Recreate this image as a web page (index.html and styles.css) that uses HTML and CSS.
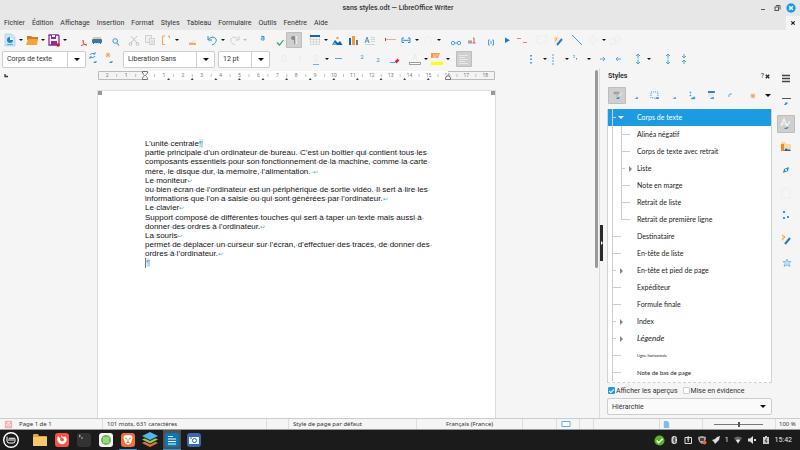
FILE: index.html
```html
<!DOCTYPE html>
<html lang="fr">
<head>
<meta charset="utf-8">
<title>sans styles.odt — LibreOffice Writer</title>
<link rel="stylesheet" href="styles.css">
</head>
<body>
<header class="titlebar">
  <h1>sans styles.odt — LibreOffice Writer</h1>
  <div class="window-buttons">
    <button aria-label="Réduire"><svg viewBox="0 0 10 10"><path d="M3 6.500h4" stroke="#555"/></svg></button>
    <button aria-label="Restaurer"><svg viewBox="0 0 10 10" fill="none" stroke="#555"><rect x="3" y="4" width="3.500" height="3.500"/><path d="M4 2.500h4v4"/></svg></button>
    <button aria-label="Fermer"><svg viewBox="0 0 10 10"><circle cx="5" cy="5" r="4.700" fill="#1b9be0"/><path d="M3.200 3.200l3.600 3.600M6.800 3.200L3.200 6.800" stroke="#fff" stroke-width="1.500"/></svg></button>
  </div>
</header>
<nav class="menubar">
  <button>Fichier</button><button>Édition</button><button>Affichage</button><button>Insertion</button><button>Format</button><button>Styles</button><button>Tableau</button><button>Formulaire</button><button>Outils</button><button>Fenêtre</button><button>Aide</button>
  <button class="close-doc" aria-label="Fermer le document"><svg viewBox="0 0 8 8"><path d="M2.300 2.300l3.400 3.400M5.700 2.300L2.300 5.700" stroke="#222" stroke-width="1.200"/></svg></button>
</nav>

<div class="toolbar standard">
  <div class="group">
    <button class="tool" aria-label="Nouveau"><svg viewBox="0 0 16 16"><path d="M3 2h7l3 3v9H3z" fill="#c9e5f8" stroke="#a5d3f2" stroke-width=".7"/><circle cx="8" cy="8" r="3" fill="#1d84cd"/><path d="M8 8V5a3 3 0 0 1 3 3z" fill="#fff"/><path d="M5 12.500h6" stroke="#5aa9de"/></svg></button><button class="arrow" aria-label="Plus"></button>
    <button class="tool" aria-label="Ouvrir"><svg viewBox="0 0 16 16"><path d="M3 4h4l1 1h6v3H3z" fill="#cd7c27"/><path d="M4 7h10l-1 6H2z" fill="#f8a23c"/></svg></button><button class="arrow" aria-label="Plus"></button>
    <button class="tool" aria-label="Enregistrer"><svg viewBox="0 0 16 16"><path d="M3 3h9l1 1v9H3z" fill="none" stroke="#8e299e" stroke-width="1.300"/><path d="M5 3h5v4H5zM5 9h6v4H5z" fill="#8e299e"/><path d="M6 3h3v2H6z" fill="#fff"/><circle cx="12" cy="13" r="1.800" fill="#e8101c"/></svg></button><button class="arrow" aria-label="Plus"></button>
  </div>
  <div class="group">
    <button class="tool" aria-label="Exporter PDF"><svg viewBox="0 0 16 16"><path d="M8 14c3-2 3-4 2-6-.5 3 1 5 4 5-3-1-5 0-6 1z" fill="none" stroke="#e04848" stroke-width=".8"/></svg></button>
    <button class="tool" aria-label="Imprimer"><svg viewBox="0 0 16 16"><path d="M4 5h8v2H4z" fill="#cacaca"/><rect x="3" y="7" width="10" height="4" rx="1" fill="#686b6d"/><path d="M4 9h8v3H4z" fill="#1d84cd"/><path d="M5 11h6v1H5z" fill="#d6ebfa"/></svg></button>
    <button class="tool" aria-label="Aperçu"><svg viewBox="0 0 16 16" fill="none" stroke="#3a98d8"><circle cx="10.200" cy="9" r="2.300"/><path d="M12 11l2 2.500" stroke-width="1.200"/></svg></button>
  </div>
  <div class="group">
    <button class="tool" aria-label="Couper"><svg viewBox="0 0 16 16" fill="none" stroke="#c4c4c4"><path d="M5 4l6 7M11 4l-6 7"/><circle cx="4.500" cy="12" r="1.400"/><circle cx="11.500" cy="12" r="1.400"/></svg></button>
    <button class="tool" aria-label="Copier"><svg viewBox="0 0 16 16" fill="#f0f0f0" stroke="#cfcfcf"><path d="M3.500 3.500h6v7h-6z"/><path d="M7.500 6.500h5v6h-5zM9 9h2.500M9 11h2.500"/></svg></button>
    <button class="tool" aria-label="Coller"><svg viewBox="0 0 16 16"><path d="M7 4H4.500v8.500H7M10 4h1.500v2" fill="none" stroke="#eda64b"/><path d="M7 6h5v6H7z" fill="#fafafa"/></svg></button><button class="arrow" aria-label="Plus"></button>
    <button class="tool clone" aria-label="Cloner"><svg viewBox="0 0 16 16"><path d="M7 8h4v2H7z" fill="#eee"/><path d="M4 11h7v2H4z" fill="#f4b14f"/><path d="M4 10h6v1H4z" fill="#e8dac4"/></svg></button>
  </div>
  <div class="group wide">
    <button class="tool" aria-label="Annuler"><svg viewBox="0 0 16 16" fill="none" stroke="#2b91d5"><path d="M4 4v4h4M4 8c2-3 6-4 8-1 1 2-1 5-4 6"/></svg></button><button class="arrow" aria-label="Plus"></button>
    <button class="tool" aria-label="Rétablir"><svg viewBox="0 0 16 16" fill="none" stroke="#cecece"><path d="M13 4v4H9M13 8C11 5 7 4 5 7c-1 2 1 5 4 6"/></svg></button><button class="arrow pale" aria-label="Plus"></button>
  </div>
  <div class="group medium">
    <button class="tool" aria-label="Rechercher"><svg viewBox="0 0 16 16"><path d="M7 4.500h3v3.500H8.300q-1.500-.2-1.300-1.300.2-1 3-.7" fill="none" stroke="#3c94cf"/><path d="M4 13l3-3" stroke="#eee"/></svg></button>
    <button class="tool" aria-label="Orthographe"><svg viewBox="0 0 16 16"><path d="M7 10.500l2.500 2.500L13.500 8" fill="none" stroke="#26ab61" stroke-width="1.200"/></svg></button>
    <button class="tool pressed" aria-label="Marques de formatage"><svg viewBox="0 0 16 16"><path d="M9 4H7a2 2 0 0 0 0 4h1v4h1z" fill="#8b8b8b"/><path d="M9 4h2v8h-1V5H9z" fill="#ededed"/></svg></button>
  </div>
  <div class="group medium">
    <button class="tool" aria-label="Tableau"><svg viewBox="0 0 16 16"><path d="M3 3h10v2H3z" fill="#1466a8"/><path d="M3.500 5v7.500h9V5M3 7.500h10M3 10h10M6.500 5v8M9.500 5v8" fill="none" stroke="#cfcfcf" stroke-width=".7"/></svg></button><button class="arrow" aria-label="Plus"></button>
    <button class="tool" aria-label="Image"><svg viewBox="0 0 16 16"><path d="M3 13l3-5 3 3 2-2 2.500 4z" fill="#0a63ac"/><path d="M3 13l3-3 2 3z" fill="#5ab1e9"/><circle cx="8.500" cy="6" r="1.300" fill="#f8a349"/></svg></button>
    <button class="tool" aria-label="Diagramme"><svg viewBox="0 0 16 16"><path d="M4 6h2v7H4z" fill="#1467ad"/><path d="M7 4h3v9H7z" fill="#ef9b38"/><path d="M11 8h2v5h-2z" fill="#777"/></svg></button>
    <button class="tool" aria-label="Zone de texte"><svg viewBox="0 0 16 16" fill="none"><path d="M4 11l2-6 2 6M5 9h2.500" stroke="#4799d2"/><path d="M9.500 5.500H14M9.500 7.500H14M9.500 9.500H14M4 12.500h10" stroke="#ccc" stroke-width=".8"/></svg></button>
  </div>
  <div class="group wide">
    <button class="tool" aria-label="Saut de page"><svg viewBox="0 0 16 16"><path d="M3 7.500h11" stroke="#e78888" stroke-dasharray="1.500 .6"/><path d="M3.500 6v3" stroke="#cd3737"/></svg></button>
    <button class="tool" aria-label="Champ"><svg viewBox="0 0 16 16" fill="none" stroke="#258ccc"><path d="M6 6H4v4.500h2M10 6h2v4.500h-2M5 8.300h6"/></svg></button><button class="arrow" aria-label="Plus"></button>
    <button class="tool" aria-label="Symbole"><svg viewBox="0 0 16 16"><path d="M5 12h2c-4-3-3-7 1-7s5 4 1 7h2" fill="none" stroke="#f0f0f0"/></svg></button><button class="arrow" aria-label="Plus"></button>
  </div>
  <div class="group">
    <button class="tool" aria-label="Lien"><svg viewBox="0 0 16 16" fill="none" stroke="#4aa3db"><circle cx="5" cy="11" r="1.700"/><circle cx="11" cy="11" r="1.700"/><path d="M6.500 11h3"/></svg></button>
    <button class="tool" aria-label="Note de bas de page"><svg viewBox="0 0 16 16"><path d="M4 8h4v4H4z" fill="#c6c6c6"/><path d="M9 6h1v5M8.500 11h3" fill="none" stroke="#d25559"/><path d="M4 10h4" stroke="#b46a6a"/></svg></button>
  </div>
  <div class="group">
    <button class="tool" aria-label="Repère de texte"><svg viewBox="0 0 16 16" fill="none" stroke="#4da4da"><path d="M7 8H5.500v5H7M9 8h1.500v5H9M8 9v3"/></svg></button>
    <button class="tool" aria-label="Renvoi"><svg viewBox="0 0 16 16"><path d="M6 5.500l5 2.700-5 2.700z" fill="#187dc8"/></svg></button>
    <button class="tool" aria-label="Suivi des modifications"><svg viewBox="0 0 16 16"><path d="M2 6.500h4M8 10.500h4" stroke="#ef7d7d"/></svg></button>
  </div>
  <div class="group">
    <button class="tool" aria-label="Commentaire"><svg viewBox="0 0 16 16"><path d="M3 4h10v7H7l-2 2v-2H3z" fill="none" stroke="#ededed"/></svg></button>
    <button class="tool" aria-label="Fonctions de dessin"><svg viewBox="0 0 16 16"><path d="M4 5l3-1 3 2-3 4-3 2z" fill="#fde2c3"/><path d="M5 6l2 1-2 2" stroke="#f1a455" fill="none"/><path d="M7 13l5-6" stroke="#217fc5" stroke-width="2"/></svg></button>
  </div>
  <div class="group">
    <button class="tool" aria-label="Ligne"><svg viewBox="0 0 16 16"><path d="M3 3l10 10" stroke="#3e9cd9"/></svg></button>
    <button class="tool" aria-label="Formes"><svg viewBox="0 0 16 16"><path d="M8 4l4 4-4 4-4-4z" fill="none" stroke="#ededed"/></svg></button><button class="arrow" aria-label="Plus"></button>
    <button class="tool" aria-label="Propriétés"><svg viewBox="0 0 16 16" fill="none" stroke="#ededed"><rect x="3" y="7" width="5" height="5"/><circle cx="10" cy="7" r="3"/></svg></button>
  </div>
</div>

<div class="toolbar formatting">
  <label class="combo style-combo"><select aria-label="Style de paragraphe"><option>Corps de texte</option></select></label>
  <button class="tool" aria-label="Actualiser le style"><svg viewBox="0 0 16 16" fill="none" stroke="#3899d5"><path d="M3 4a3 2 0 0 1 5-1M8 5a3 2 0 0 1-5 1M8 1v2H6M3 8V6h2" stroke-width=".9"/><path d="M6 12q1-2 4-2l-1 2z" fill="#3899d5" stroke="none"/></svg></button>
  <button class="tool" aria-label="Nouveau style"><svg viewBox="0 0 16 16"><path d="M3 2l4 4M7 2L3 6M5 1.500v5M2.500 4h5" stroke="#f3a25a" stroke-width=".9"/><path d="M6 12q1-2 4-2l-1 2z" fill="#3899d5"/></svg></button>
  <label class="combo font-combo"><select aria-label="Police"><option>Liberation Sans</option></select></label>
  <label class="combo size-combo"><select aria-label="Taille"><option>12 pt</option></select></label>
  <div class="group letters">
    <button class="tool ghost" aria-label="Gras">G</button>
    <button class="tool ghost" aria-label="Italique"><i>I</i></button>
    <button class="tool ghost" aria-label="Souligné"><span class="underlined">S</span></button><button class="arrow" aria-label="Plus"></button>
    <button class="tool ghost" aria-label="Barré"><svg viewBox="0 0 16 16"><path d="M5 7.500h7" stroke="#4ba4dd"/></svg></button>
  </div>
  <div class="group medium">
    <button class="tool script" aria-label="Exposant"><sup>2</sup></button>
    <button class="tool script" aria-label="Indice"><sub>2</sub></button>
    <button class="tool" aria-label="Effacer"><svg viewBox="0 0 16 16"><path d="M4 11.500h5" stroke="#51a9df"/><path d="M9.500 11.500l3-3" stroke="#d9263c" stroke-width="2.500"/></svg></button>
  </div>
  <div class="group medium">
    <button class="tool" aria-label="Couleur de police"><svg viewBox="0 0 16 16"><path d="M6 9l2-6 2 6M7 7h2" fill="none" stroke="#eaeaea"/><rect x="2.500" y="11.500" width="11" height="2" fill="#fff" stroke="#888" stroke-width=".8"/></svg></button><button class="arrow" aria-label="Plus"></button>
    <button class="tool" aria-label="Surlignage"><svg viewBox="0 0 16 16"><path d="M2 2h9l-2 5H2z" fill="#f49b48"/><path d="M4 4h3M4 6h2M9 3l-3 4" stroke="#fff1db" stroke-width=".7"/><path d="M2 11h12v3H2z" fill="#ff0"/></svg></button><button class="arrow" aria-label="Plus"></button>
  </div>
  <div class="group wide">
    <button class="tool pressed" aria-label="Aligner à gauche"><svg viewBox="0 0 16 16"><path d="M3 4.500h9M3 6.500h6M3 8.500h9M3 10.500h6M3 12.500h9" stroke="#eee" stroke-width=".8"/></svg></button>
    <button class="tool" aria-label="Centrer"></button><button class="tool" aria-label="Aligner à droite"></button><button class="tool" aria-label="Justifier"></button>
  </div>
  <div class="group">
    <button class="tool" aria-label="Puces"><svg viewBox="0 0 16 16"><path d="M5 4v9" stroke="#1982cb" stroke-width="1.500" stroke-dasharray="1.500 2"/></svg></button><button class="arrow" aria-label="Plus"></button>
    <button class="tool" aria-label="Numérotation"><svg viewBox="0 0 16 16"><path d="M5 3v11" stroke="#4da4dc" stroke-width="1" stroke-dasharray="2 1"/></svg></button><button class="arrow" aria-label="Plus"></button>
    <button class="tool" aria-label="Plan"><svg viewBox="0 0 16 16"><path d="M4 4v3M6.500 7v2" stroke="#2b8fd2" stroke-dasharray="1.500 .7"/></svg></button><button class="arrow" aria-label="Plus"></button>
  </div>
  <div class="group">
    <button class="tool" aria-label="Augmenter le retrait"><svg viewBox="0 0 16 16"><path d="M5 8h5M8 6l2 2-2 2" fill="none" stroke="#54a8dd"/></svg></button>
    <button class="tool" aria-label="Diminuer le retrait"><svg viewBox="0 0 16 16"><path d="M10 8H5M7 6L5 8l2 2" fill="none" stroke="#54a8dd"/></svg></button>
  </div>
  <div class="group spacing">
    <button class="tool" aria-label="Interligne"><svg viewBox="0 0 16 16"><path d="M8 3v10M6 5l2-2 2 2M6 11l2 2 2-2" fill="none" stroke="#4ba3dc"/><path d="M6 8h4" stroke="#f5f5f5"/></svg></button><button class="arrow" aria-label="Plus"></button>
  </div>
  <div class="group wide">
    <button class="tool" aria-label="Augmenter l’espacement"><svg viewBox="0 0 16 16"><path d="M8 3v10M6 5l2-2 2 2M6 11l2 2 2-2" fill="none" stroke="#4ba3dc"/><path d="M6 8h4" stroke="#f5f5f5"/></svg></button>
    <button class="tool" aria-label="Diminuer l’espacement"><svg viewBox="0 0 16 16"><path d="M8 3v4M6 5l2 2 2-2M8 13V9M6 11l2-2 2 2" fill="none" stroke="#4ba3dc"/></svg></button>
  </div>
</div>

<main class="workspace">
  <section class="editor">
    <svg class="ruler" id="ruler" viewBox="0 0 594 14" preserveAspectRatio="xMinYMin" aria-hidden="true"></svg>
    <div class="canvas">
      <article class="page" id="page">
        <p>L’unité centrale<b class="pilcrow">¶</b></p>
        <p>partie principale d’un ordinateur de bureau. C’est un boîtier qui contient tous les <br>composants essentiels pour son fonctionnement de la machine, comme la carte <br>mère, le disque dur, la mémoire, l’alimentation. <b class="ret">↩</b><br>Le moniteur<b class="ret">↩</b><br>ou bien écran de l’ordinateur est un périphérique de sortie vidéo. Il sert à lire les <br>informations que l’on a saisie ou qui sont générées par l’ordinateur.<b class="ret">↩</b><br>Le clavier<b class="ret">↩</b><br>Support composé de différentes touches qui sert à taper un texte mais aussi à <br>donner des ordres à l’ordinateur.<b class="ret">↩</b><br>La souris<b class="ret">↩</b><br>permet de déplacer un curseur sur l’écran, d’effectuer des tracés, de donner des <br>ordres à l’ordinateur.<b class="ret">↩</b></p>
        <p class="caret"><b class="pilcrow">¶</b></p>
      </article>
    </div>
  </section>
  <div class="scrollbar"><div class="thumb"></div></div>
  <div class="splitter"><button aria-label="Masquer le volet"></button></div>
  <aside class="deck">
    <header class="deck-title"><h2>Styles</h2><button>?</button><button aria-label="Fermer le volet"><svg viewBox="0 0 8 8"><path d="M2 2l4 4M6 2L2 6" stroke="#222" stroke-width="1.500"/></svg></button></header>
    <div class="style-kinds">
      <button class="kind pressed" aria-label="Paragraphe"><svg viewBox="0 0 18 17"><path d="M6 5h5v2H6zM9 5v6" stroke="#aaa" fill="#999" stroke-width=".8"/><path d="M8 12q1-2 4-2l-1 2z" fill="#2c8ed2"/><path d="M12 9l2-3" stroke="#eee"/></svg></button>
      <button class="kind" aria-label="Caractère"><svg viewBox="0 0 18 17"><path d="M8 12q1-2 3-2v2z" fill="#4ba2dc"/></svg></button>
      <button class="kind" aria-label="Cadre"><svg viewBox="0 0 18 17"><rect x="5" y="5" width="7" height="6" fill="none" stroke="#3e9ad8" stroke-dasharray="1 1"/><path d="M9 12q1-2 4-2v2z" fill="#3e9ad8"/></svg></button>
      <button class="kind" aria-label="Page"><svg viewBox="0 0 18 17"><path d="M8 12q1-2 3-2v2z" fill="#4ba2dc"/></svg></button>
      <button class="kind" aria-label="Liste"><svg viewBox="0 0 18 17"><path d="M6 5h1v1H6zM6 8h1v1H6zM7 12q1-2 4-2v2z" fill="#3e9ad8" stroke="#3e9ad8" stroke-width=".5"/></svg></button>
      <button class="kind" aria-label="Tableau"><svg viewBox="0 0 18 17"><path d="M6 4h7v2H6z" fill="#2a80c0"/><path d="M8 12q1-2 4-2v2z" fill="#3e9ad8"/><path d="M6 7h6M6 9h6" stroke="#ddd"/></svg></button>
      <button class="kind" aria-label="Mode remplir"><svg viewBox="0 0 18 17"><path d="M8 10V8q0-1 3-1" fill="none" stroke="#4ba2dc"/></svg></button>
      <button class="kind last" aria-label="Nouveau style"><svg viewBox="0 0 18 17"><path d="M7 7l4 4M11 7l-4 4M9 6.500v5M6.500 9h5" stroke="#f2a057"/></svg></button>
      <button class="arrow big" aria-label="Actions de style"></button>
    </div>
    <ul class="tree">
      <li class="selected open">Corps de texte</li>
      <li class="child">Alinéa négatif</li>
      <li class="child">Corps de texte avec retrait</li>
      <li class="child closed">Liste</li>
      <li class="child">Note en marge</li>
      <li class="child">Retrait de liste</li>
      <li class="child end">Retrait de première ligne</li>
      <li>Destinataire</li>
      <li>En-tête de liste</li>
      <li class="closed">En-tête et pied de page</li>
      <li>Expéditeur</li>
      <li>Formule finale</li>
      <li class="closed">Index</li>
      <li class="closed legend">Légende</li>
      <li class="tiny">Ligne horizontale</li>
      <li class="small">Note de bas de page</li>
    </ul>
    <div class="checks">
      <label><input type="checkbox" checked>Afficher les aperçus</label>
      <label><input type="checkbox">Mise en évidence</label>
    </div>
    <label class="combo filter-combo"><select aria-label="Filtre"><option>Hiérarchie</option></select></label>
  </aside>
  <nav class="tabs">
    <button aria-label="Paramètres"><svg viewBox="0 0 18 18"><path d="M5 6.500h8M5 9.500h8M5 12.500h8" stroke="#444" stroke-width="1.400"/></svg></button>
    <button aria-label="Propriétés"><svg viewBox="0 0 18 18"><path d="M5 6.500h9" stroke="#555"/><path d="M7 13l2-3 2 1-2 2z" fill="#2e90d3"/></svg></button>
    <button class="pressed" aria-label="Styles"><svg viewBox="0 0 18 18"><path d="M4 11l3-7 3 7M5 9h4M10 11l3-5" fill="none" stroke="#f5f5f5" stroke-width="1.200"/><path d="M7 14q1-2 5-2l-2 2z" fill="#2e90d3"/></svg></button>
    <button aria-label="Galerie"><svg viewBox="0 0 18 18"><path d="M4 4h4l1 2h5v7H4z" fill="#fbd6a6"/><path d="M4 6h3v7H4z" fill="#f08b28"/><path d="M7 13l2-3 2 2 1-1 2 2z" fill="#1466ad"/></svg></button>
    <button aria-label="Navigateur"><svg viewBox="0 0 18 18"><path d="M6 12l1-4 5-2-1 4z" fill="#288bd0"/><circle cx="9" cy="9" r="1" fill="#fff"/></svg></button>
    <button aria-label="Page"><svg viewBox="0 0 18 18"><path d="M5 4h5l3 3v7H5z" fill="none" stroke="#ededed"/></svg></button>
    <button aria-label="Inspecteur de styles"><svg viewBox="0 0 18 18"><path d="M6 4h2v2H6zM6 10h2v2H6zM10 9h2v2h-2z" fill="#3596d6"/></svg></button>
    <button aria-label="Suivi"><svg viewBox="0 0 18 18"><path d="M5 5l4 1-4 6z" fill="#fbd6a6"/><path d="M5 5l3 2-3 3" fill="none" stroke="#f2a057"/><path d="M8 14l5-6" stroke="#1d7cc4" stroke-width="2"/></svg></button>
    <button aria-label="Signets"><svg viewBox="0 0 18 18"><path d="M10 6l1 2.500h3l-2 2 1 3-3-1.500-3 1.500 1-3-2-2h3z" fill="#c6e2f6" stroke="#6db4e4" stroke-width=".8"/></svg></button>
  </nav>
</main>

<footer class="statusbar">
  <span class="cell page-cell"><svg viewBox="0 0 10 10" fill="none" stroke="#f09b9b"><path d="M1.500 1.500h7v7h-7zM3 1.500v3h4v-3M3 8.500V6.500h4v2"/></svg>Page 1 de 1</span>
  <span class="cell words">101 mots, 631 caractères</span>
  <span class="cell blank"></span>
  <span class="cell style-cell">Style de page par défaut</span>
  <span class="cell lang">Français (France)</span>
  <span class="cell insert"></span>
  <span class="cell select-mode"><svg viewBox="0 0 10 10"><path d="M1 2.500h8v5H1z" fill="#fff" stroke="#59b0e4"/></svg></span>
  <span class="cell sign"></span>
  <span class="cell info"></span>
  <span class="cell views"><svg viewBox="0 0 10 10"><path d="M2 1h4l2 2v6H2z" fill="#7ebcea"/></svg></span>
  <span class="cell zoom"><input type="range" min="0" max="100" value="50" aria-label="Zoom"></span>
  <span class="cell percent">100 %</span>
</footer>

<footer class="taskbar">
  <button class="start" aria-label="Menu"><svg viewBox="0 0 18 18" fill="none" stroke="#fff"><circle cx="9" cy="9" r="7.300" stroke-width="1.400"/><path d="M5 5.500V10q0 2 2 2h4q2 0 2-2V8q0-1-1-1t-1 1v2M11 8q0-1-1-1T9 8v2M9 8q0-1-1-1T7 8v2" stroke-width="1"/></svg></button>
  <button aria-label="Fichiers"><svg viewBox="0 0 18 18"><path d="M2 4q0-1 1-1h4l1 2h7q1 0 1 1v8H2z" fill="#dca846"/><path d="M2 6h14v9H2z" fill="#fac86a"/></svg></button>
  <button aria-label="Firefox"><svg viewBox="0 0 18 18"><rect x="2" y="2" width="14" height="14" rx="3" fill="#fa5141"/><path d="M8 4q1 2 3 2 2-1 1-1 3 3 1 6-3 4-7 1Q3 9 5 5q1 2 3 2-2 1 0 3 2 1 3-1 0-1-1-2-2 0-2-3z" fill="#fff"/></svg></button>
  <button aria-label="Terminal"><svg viewBox="0 0 18 18"><rect x="2" y="2" width="14" height="14" rx="3" fill="#333"/><path d="M4 4l1.500 1L4 6M6 7h2" stroke="#ddd" fill="none" stroke-width=".8"/></svg></button>
  <button aria-label="Notes"><svg viewBox="0 0 18 18"><rect x="2" y="2" width="14" height="14" rx="3" fill="#f3f3f3"/><circle cx="9" cy="9" r="5" fill="#70b84b"/><path d="M6 7h6M6 9h6M6 11h6" stroke="#e9f7e1" stroke-width=".8"/></svg></button>
  <button class="running" aria-label="Brave"><svg viewBox="0 0 18 18"><rect x="2" y="2" width="14" height="14" rx="3" fill="#ef7035"/><path d="M5 5l2-1h4l2 1 .5 2-1.500 5L9 14l-3-2-1.500-5z" fill="#fff"/><path d="M6 7l2 1M12 7l-2 1M9 8v3M7.500 11.500h3" stroke="#ef7035"/></svg></button>
  <button aria-label="Couches"><svg viewBox="0 0 18 18"><path d="M1 12l8-4 8 4-8 4z" fill="#ee7036"/><path d="M1 9.500l8-4 8 4-8 4z" fill="#1b1b1b"/><path d="M1 8.500l8-4 8 4-8 4z" fill="#8cce51"/><path d="M1 6l8-4 8 4-8 4z" fill="#1b1b1b"/><path d="M1 5l8-4 8 4-8 4z" fill="#54b7ea"/></svg></button>
  <button class="running active" aria-label="Writer"><svg viewBox="0 0 18 18"><rect x="2" y="2" width="14" height="14" rx="3" fill="#087bb7"/><path d="M5 5.500h5M5 8h8M5 10.500h8M5 13h8" stroke="#fff"/></svg></button>
  <button aria-label="Capture"><svg viewBox="0 0 18 18"><rect x="2" y="2" width="14" height="14" rx="3" fill="#3b67b3"/><path d="M4 6h10v7H4z" fill="#edf3fc"/><circle cx="9.500" cy="9.500" r="2" fill="#fff" stroke="#3b67b3"/><path d="M5 7h2" stroke="#3b67b3"/></svg></button>
  <div class="tray">
    <svg class="ok" viewBox="0 0 12 12"><circle cx="6" cy="6" r="5.500" fill="#55b721"/><path d="M3 6l2 2.500L9.500 4" fill="none" stroke="#fff" stroke-width="1.500"/></svg>
    <svg viewBox="0 0 10 10"><rect x="2.500" y="1" width="5.500" height="8" rx="2.700" fill="#ddd"/><path d="M3.800 3.500l3 3L5.300 8V2l1.500 1.500-3 3" fill="none" stroke="#222" stroke-width=".7"/></svg>
    <svg viewBox="0 0 10 10" fill="none" stroke="#ddd"><path d="M2 2.500h6.500v6H2zM5.200 1v6M4 4h2.500"/></svg>
    <svg viewBox="0 0 10 10"><path d="M1 2l4-1 4 1q0 5-4 7-4-2-4-7z" fill="#aaa"/><path d="M3 3h4v3H3z" fill="#444"/><circle cx="7.500" cy="7.500" r="2" fill="#e76539"/></svg>
    <svg viewBox="0 0 10 10"><path d="M1 5l3-1 2-2 3-1-1 4-2 2-2 2-1-2z" fill="#ddd"/></svg>
    <span>1</span>
    <svg viewBox="0 0 10 10"><path d="M1 3q4-3 8 0L5 9z" fill="#666"/><path d="M3 5q2-1 4 0L5 8z" fill="#eee"/></svg>
    <svg viewBox="0 0 10 10"><path d="M1 3.500h2L6 1v8L3 6.500H1z" fill="#ddd"/><path d="M7 4l2 2M9 4L7 6" stroke="#ddd"/></svg>
    <svg viewBox="0 0 10 10"><path d="M2 2h2V1h2v1h2v7H2z" fill="#ccc"/><path d="M6 3L4 6h2L5 8" fill="none" stroke="#222" stroke-width=".8"/></svg>
    <time>15:42</time>
  </div>
</footer>
<script src="app.js"></script>
</body>
</html>
```

FILE: styles.css
```css
* { box-sizing: border-box; }

body {
  margin: 0;
  height: 100vh;
  display: flex;
  flex-direction: column;
  overflow: hidden;
  background: #f5f5f5;
  color: #333;
  font: 7px/10px Roboto, "Noto Sans", sans-serif;
}

button, select, input {
  font: inherit;
  color: inherit;
  margin: 0;
}

button {
  border: 0;
  padding: 0;
  background: none;
}

svg { display: block; }
h1, h2, p, ul { margin: 0; padding: 0; }

/* Title and menus */
.titlebar {
  height: 16px;
  display: grid;
  grid-template-columns: 1fr auto 1fr;
  align-items: center;
  background: #e7e7e7;
  padding-right: 4px;
}
.titlebar h1 { grid-column: 2; font-size: 7px; font-weight: 500; line-height: 10px; }
.window-buttons { display: flex; gap: 4px; justify-content: flex-end; }
.window-buttons button { width: 10px; height: 10px; }

.menubar {
  height: 14px;
  display: flex;
  align-items: center;
  gap: 7px;
  padding-left: 4px;
  background: #e7e7e7;
}
.close-doc { margin-left: auto; width: 14px; height: 14px; padding: 3px; background: #f5f5f5; }

/* Toolbars */
.toolbar { display: flex; align-items: center; padding-left: 2px; }
.standard { height: 20px; }
.formatting { height: 18px; }
.group { display: flex; align-items: center; margin-right: 3px; }
.standard .group:first-child, .standard .group:nth-child(2), .medium { margin-right: 5px; }
.wide { margin-right: 6px; }
.tool { width: 16px; height: 16px; flex: none; }
.tool svg { width: 16px; height: 16px; }
.clone { margin-left: 5px; }
.pressed { background: #cfcfcf; outline: 1px solid #bdbdbd; outline-offset: -1px; border-radius: 1px; }
.arrow {
  width: 6px;
  height: 16px;
  display: grid;
  place-items: center;
  flex: none;
}
.arrow::before, .combo::after {
  content: "";
  border: 2px solid transparent;
  border-top-color: #111;
  border-bottom: 0;
}
.arrow.pale::before { border-top-color: #bbb; }
.arrow.big::before, .combo::after { border-width: 3px 3px 0; }
.ghost { color: #ebebeb; font-size: 9px; }
.underlined { border-bottom: 1px solid #6bb4e2; }
.script { color: #2b8fd2; text-align: center; }
.script sup, .script sub { font-size: 6px; }
.letters { margin-left: 6px; margin-right: 8px; }
.spacing { margin-right: 8px; }

.combo {
  display: flex;
  align-items: center;
  position: relative;
  height: 17px;
  border: 1px solid #cdcdcd;
  border-radius: 2px;
  background: linear-gradient(#cdcdcd, #cdcdcd) right 17px top / 1px 100% no-repeat #fff;
}
.combo select {
  appearance: none;
  width: 100%;
  height: 100%;
  border: 0;
  background: none;
  padding: 0 18px 0 4px;
}
.combo::after { position: absolute; right: 5px; pointer-events: none; }
.style-combo { width: 84px; }
.formatting .style-combo + .tool { margin-left: 1px; }
.font-combo { width: 92px; margin-left: 4px; }
.size-combo { width: 52px; margin-left: 3px; }

/* Document */
.workspace { flex: 1; min-height: 0; display: flex; }
.editor { flex: 1; min-width: 0; display: flex; flex-direction: column; }
.ruler { height: 14px; width: 100%; flex: none; }
.ruler text { font-size: 5px; fill: #777; text-anchor: middle; }
.canvas { flex: 1; min-height: 0; padding: 8px 98px 0 97px; }
.page {
  height: 100%;
  padding: 48px 47px 0;
  color: #111;
  font: 8px/1.15 "Liberation Sans", sans-serif;
  white-space: nowrap;
  border: 1px solid #ddd;
  border-bottom: 0;
  background:
    linear-gradient(#999, #999) left top / 4px 4px no-repeat,
    linear-gradient(#999, #999) right top / 4px 4px no-repeat,
    #fff;
}
.page b { font-weight: normal; color: #55aee5; }
.pilcrow { background: #dceefa; }
.page .ret { font-size: 6px; line-height: 1; }
.space { background: radial-gradient(circle at 50% 58%, #6db6e5 0, transparent 1px); }
.caret { border-left: 1px solid #777; width: 6px; }

.scrollbar { width: 5px; padding: 2px 1px; }
.thumb { height: 198px; border-radius: 2px; background: #999; }
.splitter { width: 4px; border-left: 1px solid #ddd; }
.splitter button {
  display: grid;
  place-items: center;
  width: 3px;
  height: 36px;
  margin-top: 157px;
  background: #2a2a2a;
}
.splitter button::before { content: ""; border: 2px solid transparent; border-left-color: #fff; border-right: 0; }

/* Styles deck */
.deck { width: 174px; padding: 2px 5px 0 4px; display: flex; flex-direction: column; }
.deck-title { display: flex; align-items: center; height: 12px; padding: 0 1px; }
.deck-title h2 { flex: 1; font-size: 7px; font-weight: bold; line-height: 10px; }
.deck-title svg { width: 7px; height: 7px; }
.style-kinds { display: flex; align-items: center; height: 27px; padding-left: 1px; }
.kind { width: 18px; height: 17px; margin-right: 1px; }
.kind.last { margin-left: 4px; }
.kind.last + .arrow { width: 9px; }

.tree {
  height: 274px;
  overflow: hidden;
  list-style: none;
  background: #fff;
  border: 1px solid #d2d2d2;
  border-top: 0;
  border-bottom-style: dashed;
  color: #222;
  font: 7px/17px Lato, sans-serif;
}
.tree li {
  position: relative;
  height: 17px;
  padding-left: 29px;
  background:
    linear-gradient(#ccc, #ccc) 4px 0 / 1px 100% no-repeat,
    linear-gradient(#ccc, #ccc) 4px 8px / 9px 1px no-repeat;
}
.tree .child {
  background:
    linear-gradient(#ccc, #ccc) 4px 0 / 1px 100% no-repeat,
    linear-gradient(#ccc, #ccc) 13px 0 / 1px 100% no-repeat,
    linear-gradient(#ccc, #ccc) 13px 8px / 9px 1px no-repeat;
}
.tree .end { background-size: 1px 100%, 1px 8px, 9px 1px; }
.tree .closed { background-size: 1px 100%, 4px 1px; }
.tree .child.closed { background-size: 1px 100%, 1px 100%, 4px 1px; }
.tree .selected { background-color: #1d9be0; background-size: 1px 100%, 4px 1px; color: #fff; }
.tree .closed::before, .tree .open::before {
  content: "";
  position: absolute;
  left: 12px;
  top: 6px;
  border: 3px solid transparent;
  border-left-color: #888;
  border-right: 0;
}
.tree .child.closed::before { left: 21px; }
.tree .open::before { top: 7px; left: 10px; border: 3px solid transparent; border-top-color: #fff; border-bottom: 0; }
.tree .legend { font-size: 8px; font-style: italic; }
.tree .tiny { font-size: 4px; }
.tree .small { font-size: 6px; }

.checks { display: flex; gap: 4px; height: 15px; align-items: center; white-space: nowrap; }
.checks label { display: flex; align-items: center; gap: 1px; }
.checks input {
  appearance: none;
  display: grid;
  place-items: center;
  width: 7px;
  height: 7px;
  margin-left: 1px;
  border: 1px solid #ccc;
  border-radius: 1px;
  background: #fff;
}
.checks input:checked { background: #1d9be0; border-color: #1d9be0; }
.checks input:checked::before {
  content: "";
  width: 4px;
  height: 2px;
  border: solid #fff;
  border-width: 0 0 1px 1px;
  transform: rotate(-45deg);
}
.filter-combo { background: #fafafa; }

.tabs { display: flex; flex-direction: column; gap: 5px; width: 23px; padding-top: 1px; }
.tabs button { width: 18px; height: 18px; }

/* Status bar */
.statusbar {
  height: 12px;
  display: flex;
  font: 6px/11px "Noto Sans", sans-serif;
  border-top: 1px solid #ccc;
  border-bottom: 1px solid #999;
}
.cell { border-right: 1px solid #ddd; padding-left: 4px; display: flex; align-items: center; white-space: nowrap; }
.cell svg { width: 9px; height: 9px; }
.page-cell { width: 103px; gap: 6px; }
.words { width: 164px; }
.blank { width: 22px; }
.style-cell { width: 128px; }
.lang { flex: 1; justify-content: center; padding: 0; }
.insert { width: 34px; }
.select-mode { width: 23px; }
.select-mode svg { width: 10px; height: 10px; }
.sign { width: 14px; }
.info { width: 66px; }
.views { width: 43px; padding-left: 2px; }
.zoom { width: 73px; padding: 0 11px; }
.percent { width: 24px; padding-left: 3px; border: 0; }
.zoom input {
  appearance: none;
  width: 49px;
  height: 8px;
  background: linear-gradient(#777, #777) center / 100% 1px no-repeat;
}
.zoom input::-webkit-slider-thumb { appearance: none; width: 2px; height: 5px; background: #555; }

/* Desktop panel */
.taskbar { height: 20px; display: flex; align-items: center; gap: 4px; padding: 0 8px 0 2px; background: #1b1b1b; color: #eee; }
.taskbar button { width: 18px; height: 20px; padding: 1px 0; }
.taskbar button svg { width: 18px; height: 18px; }
.taskbar .start { margin-right: 7px; }
.taskbar .running { box-shadow: inset 0 -1px #2c94d6; }
.taskbar .active { background: #505050; }
.tray { display: flex; align-items: center; gap: 4px; margin-left: auto; }
.tray svg { width: 10px; height: 10px; }
.tray .ok { width: 11px; height: 11px; }
```

FILE: app.js
```js
// Ruler: 19px per centimetre, zero at the left text margin.
const ruler = document.getElementById("ruler");
const zero = 145;
const end = 448;
let marks = '<rect x="98" y="3" width="397" height="9" fill="#fff"/>' +
  '<path d="M98.5 3.500H' + zero + 'V11.500H98.500zM' + end + ' 3.500H494.500V11.500H' + end + '" fill="#f3f3f3" stroke="#bbb"/>';
for (let cm = -2; cm <= 18; cm++) {
  const x = zero + cm * 18.9;
  if (cm !== 0) marks += '<text x="' + x + '" y="9">' + Math.abs(cm) + '</text>';
  if (cm < 18) marks += '<path d="M' + (x + 9.5) + ' 6v3" stroke="#aaa" stroke-width=".7"/>';
}
for (let x = zero + 23.6; x < end; x += 23.6) {
  marks += '<path d="M' + (x - 1.5) + ' 12h3l-1.500-2z" fill="#444"/>';
}
marks += '<path d="M142.500 3.500h5v1.500l-2 2.500 2 2.500v1.500h-5v-1.500l2-2.500-2-2.500z" fill="#fff" stroke="#555" stroke-width=".8"/>';
marks += '<path d="M445.500 11.500h5v-2l-2.500-2-2.500 2z" fill="#fff" stroke="#555" stroke-width=".8"/>';
marks += '<path d="M5 6v2.500h3" fill="none" stroke="#333" stroke-width="1.300"/>';
ruler.innerHTML = marks;

// Show each space of the document as a mid-height dot.
const walker = document.createTreeWalker(document.getElementById("page"), NodeFilter.SHOW_TEXT);
const nodes = [];
while (walker.nextNode()) {
  if (walker.currentNode.data.trim()) nodes.push(walker.currentNode);
}
for (const node of nodes) {
  const parts = document.createDocumentFragment();
  for (const piece of node.data.split(/( )/)) {
    if (piece === " ") {
      const dot = document.createElement("span");
      dot.className = "space";
      dot.textContent = "\u00a0";
      parts.append(dot);
    } else {
      parts.append(piece);
    }
  }
  node.replaceWith(parts);
}
```
